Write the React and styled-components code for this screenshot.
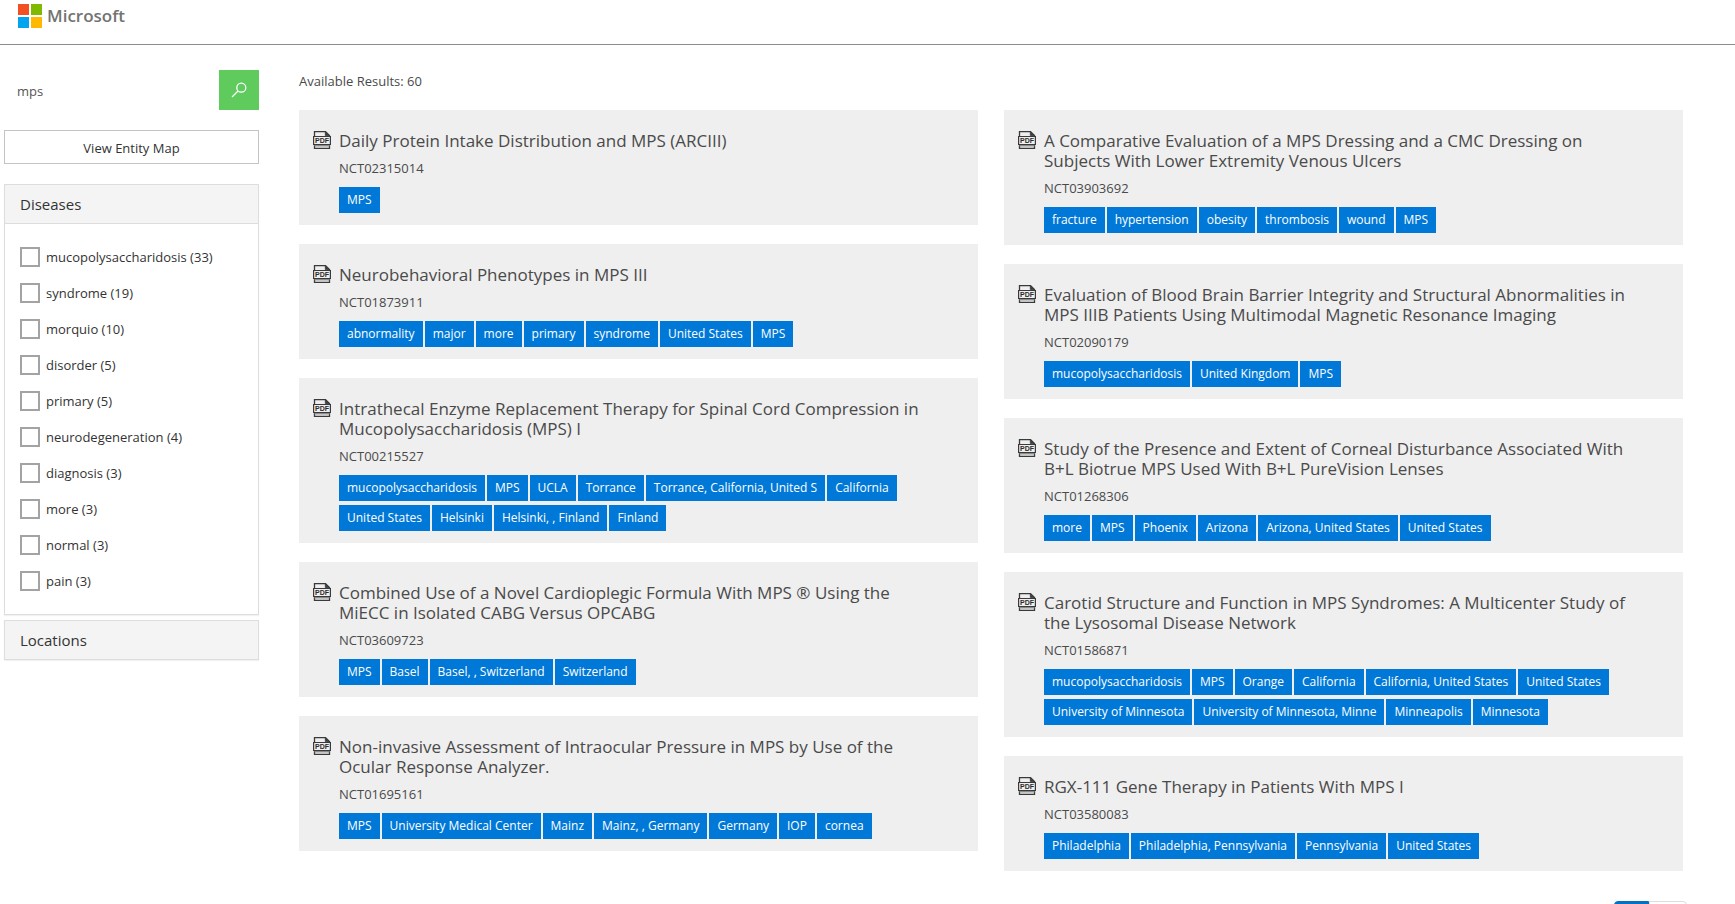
import React, { useState } from "react";
import styled, { createGlobalStyle } from "styled-components";

const GlobalStyle = createGlobalStyle`
  *, *::before, *::after { box-sizing: border-box; }
  html, body { margin: 0; padding: 0; background: #fff; }
  body {
    font-family: "Open Sans", "Noto Sans", sans-serif;
    font-size: 13px;
    line-height: 20px;
    color: #333;
  }
  button, input { font: inherit; color: inherit; }
`;

const Page = styled.div`
  height: 100vh;
  overflow-y: auto;
  scrollbar-width: none;
`;

const Header = styled.header`
  height: 45px;
  padding: 4px 18px;
  border-bottom: 1px solid #8c8c8c;
`;

const Brand = styled.a`
  display: inline-flex;
  align-items: center;
  gap: 5px;
  color: #737373;
  font-size: 17px;
  font-weight: 600;
  line-height: 24px;
  text-decoration: none;
`;

const Layout = styled.div`
  display: grid;
  grid-template-columns: 255px minmax(0, 1fr);
  column-gap: 40px;
  padding: 25px 52px 20px 4px;
`;

const Sidebar = styled.aside``;

const SearchForm = styled.form`
  display: flex;
  height: 40px;
`;

const SearchInput = styled.input`
  flex: 1;
  min-width: 0;
  border: 0;
  padding: 2px 13px 0;
  background: transparent;
  color: #555;
  outline: none;
`;

const SearchButton = styled.button`
  display: grid;
  place-items: center;
  width: 40px;
  padding: 0;
  border: 0;
  background: #5fcb5d;
  color: #fff;
  cursor: pointer;
`;

const MapButton = styled.button`
  display: block;
  width: 100%;
  height: 34px;
  margin: 20px 0;
  border: 1px solid #c4c4c4;
  background: #fff;
  padding: 2px 0 0;
  cursor: pointer;
`;

const Panel = styled.section`
  border: 1px solid #ddd;
  margin-bottom: 5px;
  box-shadow: 0 1px 1px rgba(0, 0, 0, 0.05);
`;

const PanelHeading = styled.h2`
  margin: 0;
  background: #f4f4f4;
  font-weight: 400;
`;

const PanelToggle = styled.button`
  display: block;
  width: 100%;
  height: 38px;
  border: 0;
  padding: 0 15px;
  background: transparent;
  text-align: left;
  font-size: 15px;
  cursor: pointer;
`;

const FacetList = styled.ul`
  list-style: none;
  display: grid;
  gap: 16px;
  margin: 0;
  padding: 23px 15px 23px;
  border-top: 1px solid #ddd;
`;

const Facet = styled.label`
  display: flex;
  align-items: center;
  gap: 6px;
  cursor: pointer;
`;

const Checkbox = styled.input`
  appearance: none;
  width: 20px;
  height: 20px;
  margin: 0;
  border: 2px solid #a3a3a3;
  background: #fff;

  &:checked {
    background: #0078d7;
  }
`;

const Results = styled.main`
  color: #4a4a4a;
`;

const Count = styled.p`
  margin: 1px 0 19px;
`;

const Columns = styled.div`
  display: grid;
  grid-template-columns: repeat(2, minmax(0, 1fr));
  column-gap: 26px;
  align-items: start;
`;

const Column = styled.div`
  display: grid;
  gap: 19px;
`;

const Card = styled.article`
  display: grid;
  grid-template-columns: 18px minmax(0, 1fr);
  column-gap: 8px;
  padding: 21px 40px 8px 14px;
  background: #efefef;
`;

const Title = styled.h3`
  margin: 0;
  font-size: 17px;
  font-weight: 400;
  line-height: 20px;
`;

const TitleLink = styled.a`
  color: inherit;
  text-decoration: none;
`;

const TrialId = styled.p`
  margin: 7px 0 9px;
`;

const Tags = styled.ul`
  list-style: none;
  display: flex;
  flex-wrap: wrap;
  gap: 0 2px;
  margin: 0;
  padding: 0;
`;

const Tag = styled.li`
  height: 26px;
  margin-bottom: 4px;
  padding: 0 8px;
  background: #0078d7;
  color: #fff;
  font-size: 12px;
  line-height: 26px;
  white-space: nowrap;
`;

const Pager = styled.nav`
  display: flex;
  justify-content: flex-end;
  margin: 30px -4px 0 0;
`;

const PageButton = styled.button`
  width: ${(p) => (p.$active ? 35 : 38)}px;
  height: 34px;
  border: 1px solid ${(p) => (p.$active ? "#0072c6" : "#ddd")};
  border-radius: ${(p) => (p.$active ? "4px 0 0 4px" : "0 4px 4px 0")};
  background: ${(p) => (p.$active ? "#0072c6" : "#fff")};
  color: ${(p) => (p.$active ? "#fff" : "#0072c6")};
`;

const PdfSvg = styled.svg`
  display: block;
`;

const PdfLabel = styled.text`
  fill: #2b2b2b;
  stroke: none;
  font-family: "Liberation Sans", sans-serif;
  font-size: 7px;
  font-weight: 700;
`;

function MicrosoftMark() {
  return (
    <svg width="24" height="24" viewBox="0 0 24 24" aria-hidden="true">
      <rect width="11" height="11" fill="#f25022" />
      <rect x="13" width="11" height="11" fill="#7fba00" />
      <rect y="13" width="11" height="11" fill="#00a4ef" />
      <rect x="13" y="13" width="11" height="11" fill="#ffb900" />
    </svg>
  );
}

function SearchIcon() {
  return (
    <svg width="16" height="16" viewBox="0 0 16 16" fill="none" stroke="currentColor" strokeWidth="1.3" aria-hidden="true">
      <circle cx="10.3" cy="5.7" r="4.5" />
      <path d="M7 9 1 15" />
    </svg>
  );
}

function PdfIcon() {
  return (
    <PdfSvg width="18" height="18" viewBox="0 0 18 18" fill="none" stroke="#3a3a3a" aria-hidden="true">
      <path d="M1.5 6V.6h11L16.500 4.500V6M1.500 14v3.400h15V14" strokeWidth="1.300" />
      <path d="M12.300.8v3.700h3.700z" fill="#3a3a3a" strokeWidth="0.800" />
      <path d="M.6 5.500h16.800v8H.6z" strokeWidth="1.200" />
      <path d="M1.500 14.700h15" stroke="#8a8a8a" strokeWidth="1.400" />
      <PdfLabel x="9" y="12" textAnchor="middle">PDF</PdfLabel>
    </PdfSvg>
  );
}

const facets = [
  ["mucopolysaccharidosis", 33],
  ["syndrome", 19],
  ["morquio", 10],
  ["disorder", 5],
  ["primary", 5],
  ["neurodegeneration", 4],
  ["diagnosis", 3],
  ["more", 3],
  ["normal", 3],
  ["pain", 3],
];

const columns = [
  [
    { title: "Daily Protein Intake Distribution and MPS (ARCIII)", id: "NCT02315014", tags: ["MPS"] },
    {
      title: "Neurobehavioral Phenotypes in MPS III",
      id: "NCT01873911",
      tags: ["abnormality", "major", "more", "primary", "syndrome", "United States", "MPS"],
    },
    {
      title: "Intrathecal Enzyme Replacement Therapy for Spinal Cord Compression in Mucopolysaccharidosis (MPS) I",
      id: "NCT00215527",
      tags: [
        "mucopolysaccharidosis", "MPS", "UCLA", "Torrance", "Torrance, California, United S", "California",
        "United States", "Helsinki", "Helsinki, , Finland", "Finland",
      ],
    },
    {
      title: "Combined Use of a Novel Cardioplegic Formula With MPS ® Using the MiECC in Isolated CABG Versus OPCABG",
      id: "NCT03609723",
      tags: ["MPS", "Basel", "Basel, , Switzerland", "Switzerland"],
    },
    {
      title: "Non-invasive Assessment of Intraocular Pressure in MPS by Use of the Ocular Response Analyzer.",
      id: "NCT01695161",
      tags: ["MPS", "University Medical Center", "Mainz", "Mainz, , Germany", "Germany", "IOP", "cornea"],
    },
  ],
  [
    {
      title: "A Comparative Evaluation of a MPS Dressing and a CMC Dressing on Subjects With Lower Extremity Venous Ulcers",
      id: "NCT03903692",
      tags: ["fracture", "hypertension", "obesity", "thrombosis", "wound", "MPS"],
    },
    {
      title: "Evaluation of Blood Brain Barrier Integrity and Structural Abnormalities in MPS IIIB Patients Using Multimodal Magnetic Resonance Imaging",
      id: "NCT02090179",
      tags: ["mucopolysaccharidosis", "United Kingdom", "MPS"],
    },
    {
      title: "Study of the Presence and Extent of Corneal Disturbance Associated With B+L Biotrue MPS Used With B+L PureVision Lenses",
      id: "NCT01268306",
      tags: ["more", "MPS", "Phoenix", "Arizona", "Arizona, United States", "United States"],
    },
    {
      title: "Carotid Structure and Function in MPS Syndromes: A Multicenter Study of the Lysosomal Disease Network",
      id: "NCT01586871",
      tags: [
        "mucopolysaccharidosis", "MPS", "Orange", "California", "California, United States", "United States",
        "University of Minnesota", "University of Minnesota, Minne", "Minneapolis", "Minnesota",
      ],
    },
    {
      title: "RGX-111 Gene Therapy in Patients With MPS I",
      id: "NCT03580083",
      tags: ["Philadelphia", "Philadelphia, Pennsylvania", "Pennsylvania", "United States"],
    },
  ],
];

function ResultCard({ title, id, tags }) {
  return (
    <Card>
      <PdfIcon />
      <div>
        <Title>
          <TitleLink href={"#" + id}>{title}</TitleLink>
        </Title>
        <TrialId>{id}</TrialId>
        <Tags>
          {tags.map((tag) => (
            <Tag key={tag}>{tag}</Tag>
          ))}
        </Tags>
      </div>
    </Card>
  );
}

export default function App() {
  const [query, setQuery] = useState("mps");
  return (
    <Page>
      <GlobalStyle />
      <Header>
        <Brand href="#home">
          <MicrosoftMark />
          Microsoft
        </Brand>
      </Header>
      <Layout>
        <Sidebar>
          <SearchForm role="search" onSubmit={(e) => e.preventDefault()}>
            <SearchInput aria-label="Search" value={query} onChange={(e) => setQuery(e.target.value)} />
            <SearchButton type="submit" aria-label="Submit search">
              <SearchIcon />
            </SearchButton>
          </SearchForm>
          <MapButton type="button">View Entity Map</MapButton>
          <Panel>
            <PanelHeading>
              <PanelToggle type="button" aria-expanded="true">Diseases</PanelToggle>
            </PanelHeading>
            <FacetList>
              {facets.map(([name, count]) => (
                <li key={name}>
                  <Facet>
                    <Checkbox type="checkbox" />
                    {name} ({count})
                  </Facet>
                </li>
              ))}
            </FacetList>
          </Panel>
          <Panel>
            <PanelHeading>
              <PanelToggle type="button" aria-expanded="false">Locations</PanelToggle>
            </PanelHeading>
          </Panel>
        </Sidebar>
        <Results>
          <Count>Available Results: 60</Count>
          <Columns>
            {columns.map((cards, i) => (
              <Column key={i}>
                {cards.map((card) => (
                  <ResultCard key={card.id} {...card} />
                ))}
              </Column>
            ))}
          </Columns>
          <Pager aria-label="Result pages">
            <PageButton type="button" $active aria-label="Page 1" aria-current="page" />
            <PageButton type="button" aria-label="Page 2" />
          </Pager>
        </Results>
      </Layout>
    </Page>
  );
}
